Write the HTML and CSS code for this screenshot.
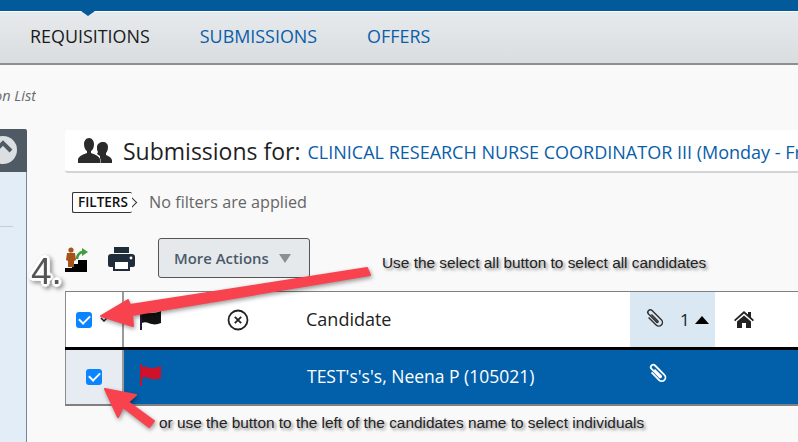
FILE: index.html
```html
<!DOCTYPE html>
<html lang="en">
<head>
    <meta charset="UTF-8">
    <title>Submissions</title>
    <link rel="stylesheet" href="styles.css">
</head>
<body>
    <div class="top-bar"><span class="top-caret"></span></div>
    <nav class="tabs">
        <a class="tab tab-active">REQUISITIONS</a>
        <a class="tab">SUBMISSIONS</a>
        <a class="tab">OFFERS</a>
    </nav>
    <div class="crumb"><span>Requisition List</span></div>

    <div class="main">
        <aside class="sidebar">
            <div class="sidebar-head">
                <span class="collapse-btn">
                    <svg width="28" height="28" viewBox="0 0 28 28"><path d="M6 15l8-8 8 8" fill="none" stroke="#4f5a64" stroke-width="4"/></svg>
                </span>
            </div>
            <div class="sidebar-body"><div class="sidebar-line"></div></div>
        </aside>

        <section class="content">
            <div class="title-card">
                <svg class="people-icon" width="34" height="25" viewBox="0 0 34 25">
                    <path fill="#2b2b2b" d="M25 4c3 0 5 2 5 5 0 3-1 5-2 6v2c2 1 5 2 6 5v3H22v-7c-1-1-2-1-3-2l1-2c-1-1-1-3-1-5 0-3 3-5 6-5z"/>
                    <path fill="#2b2b2b" stroke="#fff" stroke-width="1" paint-order="stroke" d="M11 0c3 0 5 3 5 6 0 3-1 6-3 7v2c3 1 8 3 9 6v4H0v-4c1-3 6-5 9-6v-2C7 12 6 9 6 6c0-3 2-6 5-6z"/>
                </svg>
                <h1 class="title">Submissions for:</h1>
                <span class="title-req">CLINICAL RESEARCH NURSE COORDINATOR III (Monday - Friday, Days)</span>
            </div>

            <div class="filters">
                <span class="filter-tag">FILTERS</span>
                <span class="filter-text">No filters are applied</span>
            </div>

            <div class="toolbar">
                <svg class="stairs-icon" width="23" height="25" viewBox="0 0 23 25">
                    <path fill="#000" d="M0 25v-4h7v-4h6v-4h9v12z"/>
                    <circle cx="6" cy="3" r="2.6" fill="#a5521b"/>
                    <path fill="#a5521b" d="M2 6h8l1 7-2 1v6H3v-6l-2-1z"/>
                    <path fill="none" stroke="#3f9d3f" stroke-width="2.6" d="M12 12c0-4 3-7 6-7"/>
                    <path fill="#3f9d3f" d="M17 1l6 4-6 4z"/>
                </svg>
                <svg class="print-icon" width="27" height="24" viewBox="0 0 27 24">
                    <path fill="#1f2d3a" d="M6 0h15v6H6z"/>
                    <path fill="#1f2d3a" d="M3 7h21a3 3 0 0 1 3 3v8a2 2 0 0 1-2 2h-3v4H5v-4H2a2 2 0 0 1-2-2v-8a3 3 0 0 1 3-3z"/>
                    <path fill="#fff" d="M7 15h13v7H7z"/>
                    <circle cx="23" cy="11" r="1.4" fill="#fff"/>
                </svg>
                <button class="more-btn">More Actions <span class="more-caret"></span></button>
            </div>

            <div class="grid">
                <div class="cell cell-sel">
                    <span class="check"></span>
                    <svg class="sel-menu" width="8" height="6" viewBox="0 0 8 6"><path d="M1 1l3 3 3-3" fill="none" stroke="#222" stroke-width="1.500"/></svg>
                </div>
                <div class="cell">
                    <svg class="flag" width="24" height="20" viewBox="0 0 24 20"><path fill="#1d1d3f" d="M1 0h2v20H1z"/><path fill="#111" d="M3 2c4-2 7 2 10 1 3 0 6-1 9-2v12c-3 1-6 2-9 1-3 0-6-3-10-1z"/></svg>
                </div>
                <div class="cell">
                    <svg class="x-circle" width="22" height="22" viewBox="0 0 22 22"><circle cx="11" cy="11" r="9.500" fill="none" stroke="#222" stroke-width="1.800"/><path d="M7.800 7.800l6.400 6.400m0-6.400l-6.400 6.400" stroke="#222" stroke-width="1.800"/></svg>
                </div>
                <div class="cell cell-name head-name">Candidate</div>
                <div class="cell cell-clip">
                    <svg class="clip" width="23" height="23" viewBox="0 0 28 28"><path transform="rotate(-45 14 14) translate(7.500 0)" d="M4 8v13a4.500 4.500 0 0 0 9 0V5a3 3 0 0 0-6 0v14a1 1 0 0 0 2 0V8" fill="none" stroke="#333" stroke-width="1.800"/></svg>
                    <span class="sort-num">1</span><span class="sort-up"></span>
                </div>
                <div class="cell cell-home">
                    <svg width="20" height="17" viewBox="0 0 20 17"><path fill="#222" d="M10 0l4 3.500V1h3v5.200L20 9l-1.200 1.300L10 2.600 1.200 10.300 0 9z"/><path fill="#222" d="M3 10.500L10 4.500l7 6V17h-5v-5H8v5H3z"/></svg>
                </div>

                <div class="rule"></div>

                <div class="cell cell-sel row-sel"><span class="check"></span></div>
                <div class="cell row-on row-flag">
                    <svg class="flag" width="24" height="22" viewBox="0 0 24 22"><path fill="#c4122f" d="M1 0h2v22H1z"/><path fill="#d0112b" d="M3 3c4-2 7 2 10 1 3 0 6-1 9-2v12c-3 1-6 2-9 1-3 0-6-3-10-1z"/></svg>
                </div>
                <div class="cell row-on"></div>
                <div class="cell cell-name row-on row-name">TEST's's's, Neena P (105021)</div>
                <div class="cell row-on row-clip">
                    <svg width="23" height="23" viewBox="0 0 28 28"><path transform="rotate(-45 14 14) translate(7.500 0)" d="M4 8v13a4.500 4.500 0 0 0 9 0V5a3 3 0 0 0-6 0v14a1 1 0 0 0 2 0V8" fill="none" stroke="#fff" stroke-width="2.200"/></svg>
                </div>
                <div class="cell row-on"></div>
            </div>
        </section>
    </div>

    <!-- annotations drawn over the screenshot -->
    <svg class="arrows" width="798" height="442" viewBox="0 0 798 442">
        <path fill="#f8434f" stroke="#f8434f" stroke-width="2" stroke-linejoin="round" d="M101 316L128 300 130 305 367 268 370 275 132 315 133 326z"/>
        <path fill="#f8434f" stroke="#f8434f" stroke-width="2" stroke-linejoin="round" d="M105 389L136 395 128 402 154 421 149 427 123 407 118 417z"/>
    </svg>
    <div class="step-num">4.</div>
    <div class="note note-one">Use the select all button to select all candidates</div>
    <div class="note note-two">or use the button to the left of the candidates name to select individuals</div>
</body>
</html>
```

FILE: styles.css
```css
* {
    margin: 0;
    padding: 0;
    box-sizing: border-box;
}

body {
    width: 798px;
    height: 442px;
    overflow: hidden;
    position: relative;
    background: #f9f9f9;
    font-family: 'Open Sans', Arial, sans-serif;
}

.top-bar {
    height: 12px;
    background: #025a9b;
    border-bottom: 1px solid #fff;
    position: relative;
}

.top-caret {
    position: absolute;
    left: 81px;
    top: 11px;
    border-left: 7px solid transparent;
    border-right: 7px solid transparent;
    border-top: 5px solid #025a9b;
}

.tabs {
    height: 53px;
    display: flex;
    align-items: center;
    gap: 50px;
    padding-left: 30px;
    padding-bottom: 3px;
    background: linear-gradient(#e7eaec, #d9dde0);
    border-bottom: 2px solid #8f8f8f;
}

.tab {
    font-size: 17.9px;
    color: #0a5ea8;
}

.tab-active {
    color: #1a1a1a;
}

.crumb {
    width: 36px;
    height: 64px;
    padding-top: 21px;
    display: flex;
    justify-content: flex-end;
    overflow: hidden;
    white-space: nowrap;
    font-size: 14.5px;
    font-style: italic;
    color: #6b6b6b;
}

.main {
    display: flex;
    height: 313px;
}

.sidebar {
    width: 27px;
    flex-shrink: 0;
    display: flex;
    flex-direction: column;
}

.sidebar-head {
    height: 43px;
    background: #4f5a64;
    border-radius: 0 2px 0 0;
    overflow: hidden;
    position: relative;
}

.collapse-btn {
    position: absolute;
    left: -11px;
    top: 7px;
    width: 28px;
    height: 28px;
    border-radius: 50%;
    background: #dcdfe2;
}

.sidebar-body {
    flex: 1;
    background: #e3edf8;
    border-right: 1px solid #76879a;
    padding-top: 54px;
}

.sidebar-line {
    width: 13px;
    height: 1px;
    background: #c5ccd3;
}

.content {
    flex: 1;
    min-width: 0;
    padding: 1px 0 0 38px;
}

.title-card {
    height: 43px;
    display: flex;
    align-items: center;
    padding-left: 13px;
    background: #fff;
    border-bottom: 2px solid #d4d4d4;
    border-radius: 3px 0 0 3px;
    white-space: nowrap;
    overflow: hidden;
}

.people-icon {
    flex-shrink: 0;
    margin-right: 11px;
}

.title {
    font-size: 23px;
    font-weight: 400;
    color: #1f1f1f;
    margin-right: 7px;
}

.title-req {
    font-size: 18px;
    color: #0a5ea8;
    padding-top: 3px;
}

.filters {
    display: flex;
    align-items: center;
    height: 20px;
    margin: 19px 0 0 7px;
}

.filter-tag {
    position: relative;
    height: 21px;
    width: 60px;
    border: 1px solid #333;
    border-right: none;
    border-radius: 2px;
    font-size: 13.5px;
    font-weight: 600;
    line-height: 19px;
    padding-left: 5px;
    color: #111;
    background: #fff;
}

.filter-tag:after {
    content: "";
    position: absolute;
    right: -3px;
    top: 4px;
    width: 10px;
    height: 10px;
    border-top: 1px solid #333;
    border-right: 1px solid #333;
    transform: rotate(45deg);
    z-index: -1;
}

.filter-text {
    margin-left: 17px;
    font-size: 16.2px;
    color: #666;
}

.toolbar {
    display: flex;
    align-items: center;
    height: 40px;
    margin-top: 26px;
}

.stairs-icon {
    margin-top: 2px;
}

.print-icon {
    margin: 2px 0 0 20px;
}

.more-btn {
    width: 152px;
    height: 40px;
    margin-left: 23px;
    padding-left: 15px;
    display: flex;
    align-items: center;
    gap: 10px;
    background: #e6e9ec;
    border: 1px solid #555;
    border-radius: 3px;
    font-family: 'Open Sans', Arial, sans-serif;
    font-size: 14.9px;
    font-weight: 600;
    color: #4b5a69;
}

.more-caret {
    border-left: 6px solid transparent;
    border-right: 6px solid transparent;
    border-top: 9px solid #8a8f94;
}

.grid {
    margin-top: 13px;
    display: grid;
    grid-template-columns: 59px 76px 75px 355px 85px 83px;
    grid-template-rows: 55px 3px 54px;
    border-top: 1px solid #808080;
    border-bottom: 2px solid #808080;
    background: #fff;
}

.cell {
    display: flex;
    align-items: center;
    padding-left: 15px;
}

.cell-sel {
    padding-left: 10px;
    border-left: 1px solid #8c8c8c;
    border-right: 2px solid #9a9a9a;
}

.check {
    width: 16px;
    height: 16px;
    flex-shrink: 0;
    border-radius: 3px;
    background: #0a84ff;
    position: relative;
}

.check:after {
    content: "";
    position: absolute;
    left: 3px;
    top: 3px;
    width: 9px;
    height: 5px;
    border-left: 2.5px solid #fff;
    border-bottom: 2.5px solid #fff;
    transform: rotate(-45deg);
}

.sel-menu {
    margin-left: 8px;
}

.x-circle {
    margin-left: 12px;
}

.cell-name {
    padding-left: 31px;
    font-size: 17.5px;
}

.head-name {
    font-size: 18px;
    color: #222;
    padding-bottom: 2px;
}

.cell-clip {
    background: #d9e8f3;
    padding-left: 12px;
}

.clip {
    flex-shrink: 0;
}

.sort-num {
    margin-left: 15px;
    font-size: 17px;
    color: #222;
}

.sort-up {
    margin-left: 5px;
    border-left: 7px solid transparent;
    border-right: 7px solid transparent;
    border-bottom: 8px solid #000;
}

.cell-home {
    padding-left: 19px;
}

.rule {
    grid-column: 1 / -1;
    background: #000;
}

.row-sel {
    padding: 0 0 0 20px;
    background: #e6ecf2;
}

.row-on {
    background: #0260aa;
}

.row-flag {
    padding-bottom: 5px;
}

.row-name {
    color: #fff;
    padding-left: 32px;
    padding-bottom: 2px;
}

.row-clip {
    padding: 0 0 6px 15px;
}

.arrows {
    position: absolute;
    left: 0;
    top: 0;
    filter: drop-shadow(1px 2px 2px rgba(0,0,0,0.4));
}

/* thick white outline round the step number, like the callout tool draws it */
.step-num {
    position: absolute;
    left: 31px;
    top: 251px;
    font-family: 'Liberation Sans', Arial, sans-serif;
    font-size: 37px;
    color: #555;
    text-shadow: 3px 0 1px #fff, -3px 0 1px #fff, 0 3px 1px #fff, 0 -3px 1px #fff, 2px 2px 1px #fff, -2px 2px 1px #fff, 2px -2px 1px #fff, -2px -2px 1px #fff;
    filter: drop-shadow(2px 2px 2px rgba(0,0,0,0.45));
}

.note {
    position: absolute;
    font-family: 'Liberation Sans', Arial, sans-serif;
    font-size: 15.4px;
    color: #222;
    white-space: nowrap;
    text-shadow: 2px 2px 3px rgba(0,0,0,0.45);
}

.note-one {
    left: 382px;
    top: 254px;
}

.note-two {
    left: 159px;
    top: 414px;
}
```
